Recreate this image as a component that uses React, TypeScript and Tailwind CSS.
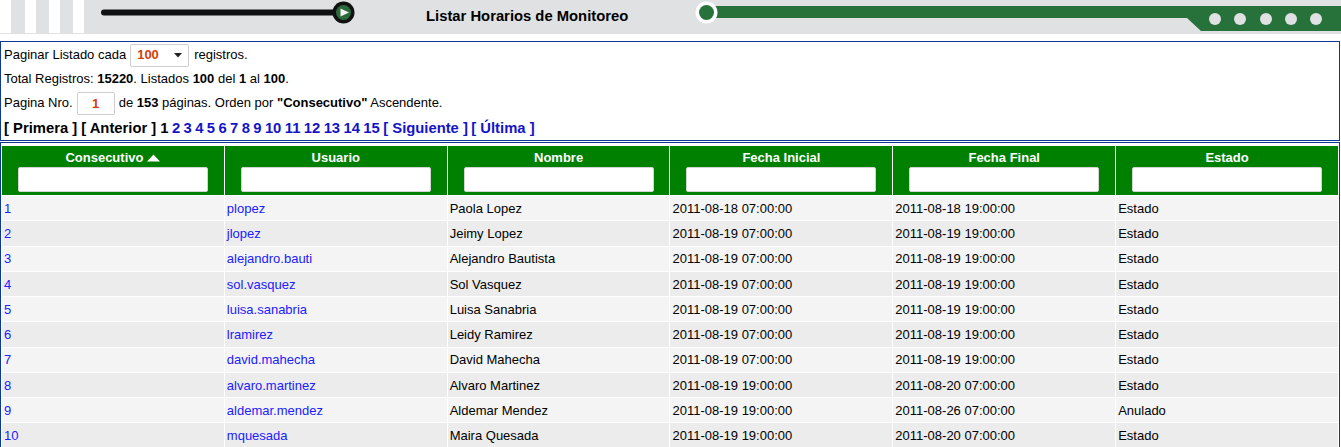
import React from 'react';

type Row = {
  id: number;
  user: string;
  name: string;
  start: string;
  end: string;
  state: string;
};

const rows: Row[] = [
  { id: 1, user: 'plopez', name: 'Paola Lopez', start: '2011-08-18 07:00:00', end: '2011-08-18 19:00:00', state: 'Estado' },
  { id: 2, user: 'jlopez', name: 'Jeimy Lopez', start: '2011-08-19 07:00:00', end: '2011-08-19 19:00:00', state: 'Estado' },
  { id: 3, user: 'alejandro.bauti', name: 'Alejandro Bautista', start: '2011-08-19 07:00:00', end: '2011-08-19 19:00:00', state: 'Estado' },
  { id: 4, user: 'sol.vasquez', name: 'Sol Vasquez', start: '2011-08-19 07:00:00', end: '2011-08-19 19:00:00', state: 'Estado' },
  { id: 5, user: 'luisa.sanabria', name: 'Luisa Sanabria', start: '2011-08-19 07:00:00', end: '2011-08-19 19:00:00', state: 'Estado' },
  { id: 6, user: 'lramirez', name: 'Leidy Ramirez', start: '2011-08-19 07:00:00', end: '2011-08-19 19:00:00', state: 'Estado' },
  { id: 7, user: 'david.mahecha', name: 'David Mahecha', start: '2011-08-19 07:00:00', end: '2011-08-19 19:00:00', state: 'Estado' },
  { id: 8, user: 'alvaro.martinez', name: 'Alvaro Martinez', start: '2011-08-19 19:00:00', end: '2011-08-20 07:00:00', state: 'Estado' },
  { id: 9, user: 'aldemar.mendez', name: 'Aldemar Mendez', start: '2011-08-19 19:00:00', end: '2011-08-26 07:00:00', state: 'Anulado' },
  { id: 10, user: 'mquesada', name: 'Maira Quesada', start: '2011-08-19 19:00:00', end: '2011-08-20 07:00:00', state: 'Estado' },
];

const columns = ['Consecutivo', 'Usuario', 'Nombre', 'Fecha Inicial', 'Fecha Final', 'Estado'];

const pages = [2, 3, 4, 5, 6, 7, 8, 9, 10, 11, 12, 13, 14, 15];

function Banner() {
  return (
    <div className="flex h-[34px] bg-[#dfe1e3]">
      {/* left decoration: stripes + slider */}
      <svg width="426" height="34" viewBox="0 0 426 34" className="shrink-0">
        <rect x="0" y="0" width="11" height="33" fill="#fff" />
        <rect x="25" y="0" width="11" height="33" fill="#fff" />
        <rect x="49" y="0" width="11" height="33" fill="#fff" />
        <rect x="73" y="0" width="11" height="33" fill="#fff" />
        <line x1="104" y1="12.5" x2="338" y2="12.5" stroke="#111" strokeWidth="6" strokeLinecap="round" />
        <circle cx="343.5" cy="12.5" r="11" fill="#111" />
        <circle cx="343.5" cy="12.5" r="7.5" fill="#2b6a3a" />
        <polygon points="340.5,8.5 349,12.5 340.5,16.5" fill="#f2f2f2" />
      </svg>
      <div className="w-[224px] shrink-0 pt-[8px] text-[14.8px] font-bold leading-[17px] text-black">
        Listar Horarios de Monitoreo
      </div>
      {/* right decoration: green track */}
      <svg width="691" height="34" viewBox="650 0 691 34" className="shrink-0">
        <path d="M714 6 H1341 V31 H1201 L1187 18 H714 Z" fill="#27723a" />
        <circle cx="706.5" cy="12.5" r="11" fill="#fff" />
        <circle cx="706.5" cy="12.5" r="7.5" fill="#27723a" />
        {[1215, 1240, 1266, 1291, 1316].map(cx => (
          <circle key={cx} cx={cx} cy="19" r="6" fill="#dfe1e3" />
        ))}
      </svg>
    </div>
  );
}

function PagingInfo() {
  return (
    <div className="mt-[7px] w-[1340px] border border-[#0a3a96] px-[3px] text-[13px] text-black">
      <div className="flex h-[26px] items-center">
        <span>Paginar Listado cada</span>
        <div className="relative ml-[4px] mr-[5px] h-[23px] w-[59px]">
          <select
            defaultValue="100"
            className="h-full w-full appearance-none rounded-[2px] border border-[#cfcfcf] bg-white pl-[6px] text-[13px] font-bold text-[#d2400a] outline-none"
          >
            <option value="10">10</option>
            <option value="50">50</option>
            <option value="100">100</option>
          </select>
          <svg
            width="8"
            height="5"
            viewBox="0 0 8 5"
            className="pointer-events-none absolute right-[7px] top-[9px]"
          >
            <polygon points="0,0 8,0 4,4.5" fill="#222" />
          </svg>
        </div>
        <span>registros.</span>
      </div>
      <div className="flex h-[22px] items-center">
        <span>
          Total Registros: <b>15220</b>. Listados <b>100</b> del <b>1</b> al <b>100</b>.
        </span>
      </div>
      <div className="flex h-[26px] items-center">
        <span>Pagina Nro.</span>
        <input
          defaultValue="1"
          className="ml-[4px] mr-[4px] h-[23px] w-[38px] rounded-[2px] border border-[#cfcfcf] bg-white text-center text-[13px] font-bold text-[#d2400a] outline-none"
        />
        <span>
          de <b>153</b> páginas. Orden por <b>"Consecutivo"</b> Ascendente.
        </span>
      </div>
      <div className="flex h-[24px] items-center gap-[3.4px] text-[14.8px] font-bold">
        <span className="mr-[0.6px]">[ Primera ]</span>
        <span className="mr-[0.6px]">[ Anterior ]</span>
        <span>1</span>
        {pages.map(p => (
          <a key={p} href="#" className="text-[#1414c8]">
            {p}
          </a>
        ))}
        <a href="#" className="text-[#1414c8]">[ Siguiente ]</a>
        <a href="#" className="text-[#1414c8]">[ Última ]</a>
      </div>
    </div>
  );
}

function SortUp() {
  return (
    <svg width="13" height="8" viewBox="0 0 13 8" className="ml-[4px] inline-block align-[1px]">
      <polygon points="0,7.5 6.5,0.5 13,7.5" fill="#fff" />
    </svg>
  );
}

function ScheduleTable() {
  return (
    <div className="mt-[1px] w-[1340px] border-x border-t border-[#0a3a96] pt-[2px]">
      <table className="w-full table-fixed border-separate border-spacing-[1px] text-[13px]">
        <thead>
          <tr>
            {columns.map((col, i) => (
              <th key={col} className="h-[49px] bg-[#008000] px-0 pb-[3px] pt-[4px] align-top font-bold text-white">
                <div className="flex h-[16px] items-center justify-center leading-[16px]">
                  {col}
                  {i === 0 && <SortUp />}
                </div>
                <input className="mx-auto mt-[1px] block h-[25px] w-[190px] rounded-[2px] border border-[#d4d4d4] bg-white outline-none" />
              </th>
            ))}
          </tr>
        </thead>
        <tbody>
          {rows.map((row, i) => (
            <tr key={row.id} className={i % 2 === 0 ? 'bg-[#f4f4f4]' : 'bg-[#ececec]'}>
              <td className="h-[24.25px] px-[2px] pt-[1px]">
                <a href="#" className="text-[#2020ff]">{row.id}</a>
              </td>
              <td className="h-[24.25px] px-[2px] pt-[1px]">
                <a href="#" className="text-[#2020ff]">{row.user}</a>
              </td>
              <td className="h-[24.25px] px-[2px] pt-[1px] text-black">{row.name}</td>
              <td className="h-[24.25px] px-[2px] pt-[1px] text-black">{row.start}</td>
              <td className="h-[24.25px] px-[2px] pt-[1px] text-black">{row.end}</td>
              <td className="h-[24.25px] px-[2px] pt-[1px] text-black">{row.state}</td>
            </tr>
          ))}
        </tbody>
      </table>
    </div>
  );
}

export default function App() {
  return (
    <div className="min-h-[447px] bg-white font-['Liberation_Sans',Arial,sans-serif]">
      <Banner />
      <PagingInfo />
      <ScheduleTable />
    </div>
  );
}
